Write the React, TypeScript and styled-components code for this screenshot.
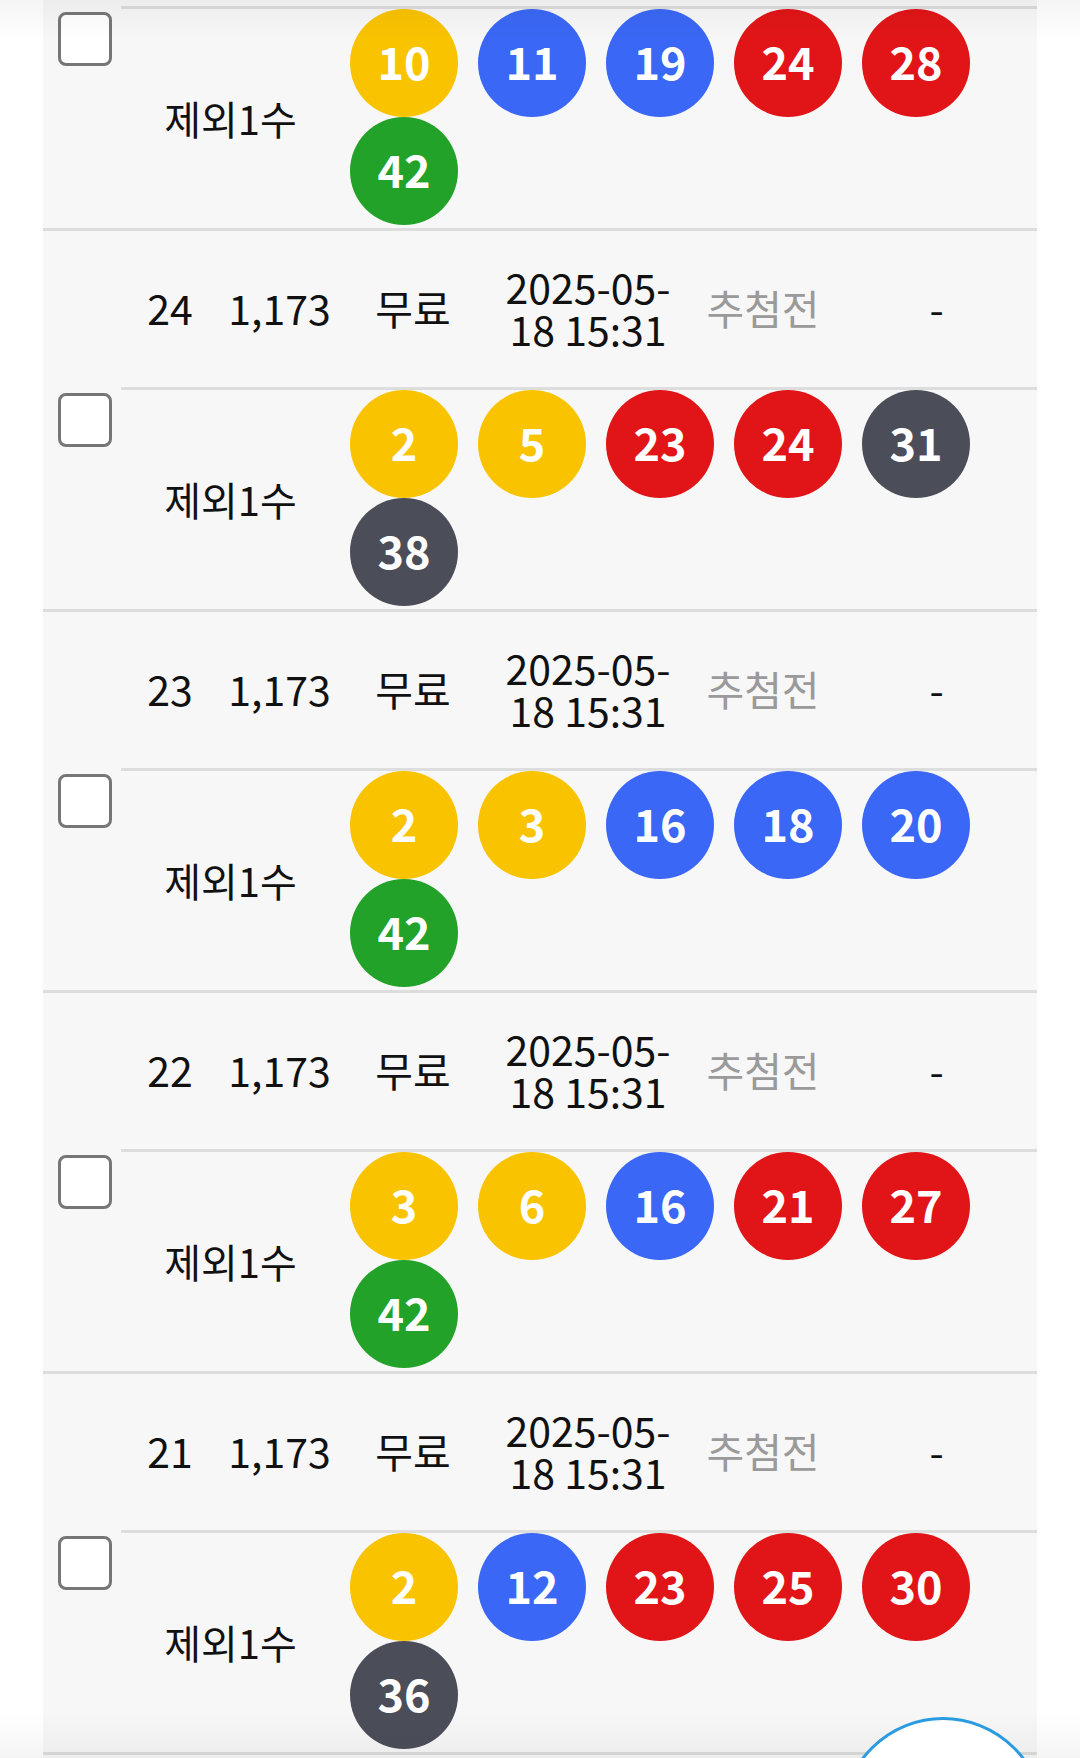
import React from 'react';
import styled, { createGlobalStyle } from 'styled-components';

const GlobalStyle = createGlobalStyle`
  html, body {
    margin: 0;
    padding: 0;
    background: #ffffff;
    overflow: hidden;
  }
  body {
    font-family: 'Noto Sans CJK KR', 'Noto Sans', sans-serif;
    color: #111;
  }
`;

const Page = styled.div`
  width: 1080px;
  height: 1758px;
  overflow: hidden;
  position: relative;
`;

// 스크롤된 상태를 흉내내기 위해 목록을 위로 당김
const List = styled.div`
  margin: -153px 43px 0;
  background: #f7f7f7;
`;

const Group = styled.div`
  display: grid;
  grid-template-columns: 78px 1fr;
  border-top: 3px solid #dddddd;
`;

const CheckCell = styled.div`
  grid-row: 1 / span 2;
  grid-column: 1;
  display: flex;
  align-items: center;
  justify-content: center;
  padding-left: 5px;
`;

const CheckBox = styled.input`
  appearance: none;
  margin: 0;
  width: 54px;
  height: 54px;
  box-sizing: border-box;
  border: 3px solid #767676;
  border-radius: 8px;
  background: #ffffff;
`;

const MainRow = styled.div`
  grid-column: 2;
  display: grid;
  grid-template-columns: 98px 121px 146px 204px 146px 1fr;
  height: 156px;
  border-bottom: 3px solid #dddddd;
`;

const Cell = styled.div<{ muted?: boolean }>`
  display: flex;
  flex-direction: column;
  align-items: center;
  justify-content: center;
  padding-bottom: 4px;
  text-align: center;
  font-size: 41px;
  line-height: 42px;
  white-space: nowrap;
  color: ${(props) => (props.muted ? '#9a9a9a' : '#111111')};
`;

const SubRow = styled.div`
  grid-column: 2;
  display: grid;
  grid-template-columns: 219px 1fr;
  min-height: 219px;
`;

const Label = styled.div`
  display: flex;
  align-items: center;
  justify-content: center;
  padding-bottom: 2px;
  font-size: 40px;
  color: #111111;
`;

const Balls = styled.div`
  display: flex;
  flex-wrap: wrap;
  align-content: flex-start;
  padding-bottom: 3px;
`;

const Ball = styled.span<{ color: string }>`
  width: 108px;
  height: 108px;
  margin: 0 10px;
  border-radius: 50%;
  background: ${(props) => props.color};
  color: #ffffff;
  font-size: 45px;
  font-weight: 700;
  line-height: 104px;
  text-align: center;
`;

const TopShade = styled.div`
  position: absolute;
  left: 0;
  right: 0;
  top: 0;
  height: 40px;
  background: linear-gradient(rgba(0, 0, 0, 0.045), rgba(0, 0, 0, 0));
  pointer-events: none;
`;

const BottomShade = styled.div`
  position: absolute;
  left: 0;
  right: 0;
  bottom: 0;
  height: 45px;
  background: linear-gradient(rgba(0, 0, 0, 0), rgba(0, 0, 0, 0.045));
  pointer-events: none;
`;

const FloatButton = styled.button`
  position: absolute;
  left: 841px;
  top: 1717px;
  width: 204px;
  height: 204px;
  border-radius: 50%;
  border: 3px solid #2a9be0;
  background: #ffffff;
  padding: 0;
`;

const ballColor = (n: number) => {
  if (n <= 10) return '#f9c300';
  if (n <= 20) return '#3a67f5';
  if (n <= 30) return '#e11517';
  if (n <= 40) return '#4b4e58';
  return '#22a229';
};

interface Ticket {
  no: number;
  amount: string;
  price: string;
  date: string;
  time: string;
  status: string;
  result: string;
  numbers: number[];
}

const tickets: Ticket[] = [
  { no: 25, amount: '1,173', price: '무료', date: '2025-05-', time: '18 15:31', status: '추첨전', result: '-', numbers: [10, 11, 19, 24, 28, 42] },
  { no: 24, amount: '1,173', price: '무료', date: '2025-05-', time: '18 15:31', status: '추첨전', result: '-', numbers: [2, 5, 23, 24, 31, 38] },
  { no: 23, amount: '1,173', price: '무료', date: '2025-05-', time: '18 15:31', status: '추첨전', result: '-', numbers: [2, 3, 16, 18, 20, 42] },
  { no: 22, amount: '1,173', price: '무료', date: '2025-05-', time: '18 15:31', status: '추첨전', result: '-', numbers: [3, 6, 16, 21, 27, 42] },
  { no: 21, amount: '1,173', price: '무료', date: '2025-05-', time: '18 15:31', status: '추첨전', result: '-', numbers: [2, 12, 23, 25, 30, 36] },
  { no: 20, amount: '1,173', price: '무료', date: '2025-05-', time: '18 15:31', status: '추첨전', result: '-', numbers: [4, 9, 14, 22, 33, 41] },
];

const App: React.FC = () => {
  return (
    <Page>
      <GlobalStyle />
      <List>
        {tickets.map((t) => (
          <Group key={t.no}>
            <CheckCell>
              <CheckBox type="checkbox" />
            </CheckCell>
            <MainRow>
              <Cell>{t.no}</Cell>
              <Cell>{t.amount}</Cell>
              <Cell>{t.price}</Cell>
              <Cell>
                <span>{t.date}</span>
                <span>{t.time}</span>
              </Cell>
              <Cell muted>{t.status}</Cell>
              <Cell>{t.result}</Cell>
            </MainRow>
            <SubRow>
              <Label>제외1수</Label>
              <Balls>
                {t.numbers.map((n) => (
                  <Ball key={n} color={ballColor(n)}>
                    {n}
                  </Ball>
                ))}
              </Balls>
            </SubRow>
          </Group>
        ))}
      </List>
      <TopShade />
      <BottomShade />
      <FloatButton aria-label="floating" />
    </Page>
  );
};

export default App;
